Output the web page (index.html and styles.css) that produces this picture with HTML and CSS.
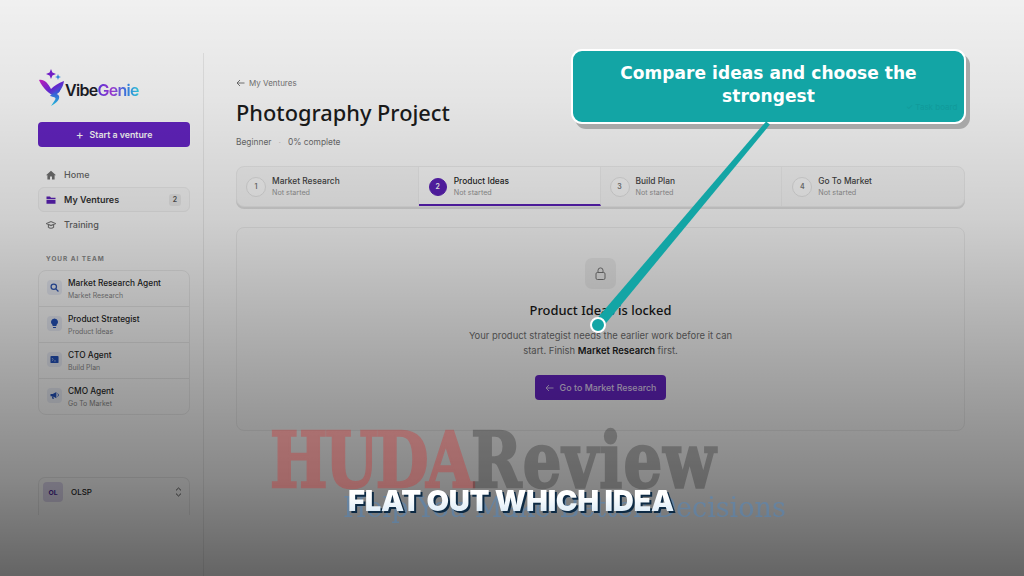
FILE: index.html
```html
<!DOCTYPE html>
<html lang="en">
<head>
<meta charset="utf-8">
<title>Photography Project</title>
<link rel="stylesheet" href="styles.css">
</head>
<body>
<div class="app">
  <aside class="sidebar">
    <div class="logo">
      <svg class="logo-mark" width="28" height="38" viewBox="0 0 28 38">
        <defs>
          <linearGradient id="lg1" x1="0" y1="0" x2="1" y2="1"><stop offset="0" stop-color="#d21fc8"/><stop offset=".55" stop-color="#6a2be0"/><stop offset="1" stop-color="#2c9ff0"/></linearGradient>
          <linearGradient id="lg2" x1="0" y1="0" x2="0" y2="1"><stop offset="0" stop-color="#4a3be8"/><stop offset="1" stop-color="#25d0f0"/></linearGradient>
        </defs>
        <path d="M1 11 C6 10 10 14 13 20 C16 17 20 14 26 12 C25 19 21 24 16 27 C12 25 5 20 1 11Z" fill="url(#lg1)"/>
        <path d="M22 19 C18 24 13 25 12 27 C15 28 19 28 17 31 L13 37 C19 34 22 30 21 27 C20 25 18 25 18 25 C21 24 23 22 22 19Z" fill="url(#lg2)"/>
        <path d="M13 0 L14.4 3.6 L18 5 L14.4 6.4 L13 10 L11.6 6.4 L8 5 L11.6 3.6Z" fill="#7a1fd6"/>
        <path d="M20 5 L20.8 7.2 L23 8 L20.8 8.8 L20 11 L19.2 8.8 L17 8 L19.2 7.2Z" fill="#2f8fe8"/>
      </svg>
      <span class="logo-text"><span class="logo-dark">Vibe</span><span class="logo-grad">Genie</span></span>
    </div>
    <button class="start-btn"><span class="plus">+</span>Start a venture</button>
    <nav class="nav">
      <a class="nav-item">
        <svg class="nav-ic" width="10" height="10" viewBox="0 0 10 10"><path d="M5 .8 L10 5.2 H8.6 V9.4 H6 V6.4 H4 V9.4 H1.4 V5.2 H0Z" fill="#707070"/></svg>
        Home</a>
      <a class="nav-item nav-active">
        <svg class="nav-ic" width="10" height="10" viewBox="0 0 10 10"><path d="M.5 1.5 H4 L5 2.7 H9.5 V4 H.5Z M.5 4.8 H9.5 V8.8 H.5Z" fill="#5b21b6"/></svg>
        My Ventures<span class="count">2</span></a>
      <a class="nav-item">
        <svg class="nav-ic" width="10" height="10" viewBox="0 0 10 10" fill="none" stroke="#777" stroke-width="1.1"><path d="M.6 3.6 L5 1.6 L9.4 3.6 L5 5.6Z"/><path d="M2.4 5 V7.2 C3.6 8.6 6.4 8.6 7.6 7.2 V5"/></svg>
        Training</a>
    </nav>
    <div class="team-label">YOUR AI TEAM</div>
    <ul class="team">
      <li class="agent">
        <span class="agent-ic"><svg width="9" height="9" viewBox="0 0 10 10" fill="none" stroke="#2d55b5" stroke-width="1.4"><circle cx="4.2" cy="4.2" r="3"/><path d="M6.5 6.5 L9.4 9.4"/></svg></span>
        <span class="agent-txt"><b>Market Research Agent</b><small>Market Research</small></span>
      </li>
      <li class="agent">
        <span class="agent-ic"><svg width="9" height="11" viewBox="0 0 10 12"><path d="M5 .5 A4 4 0 0 1 7.2 7.8 V8.8 H2.8 V7.8 A4 4 0 0 1 5 .5Z M3.4 9.8 H6.6 V11 H3.4Z" fill="#2350b8"/></svg></span>
        <span class="agent-txt"><b>Product Strategist</b><small>Product Ideas</small></span>
      </li>
      <li class="agent">
        <span class="agent-ic"><svg width="9" height="9" viewBox="0 0 10 10"><rect x=".5" y="1" width="9" height="8" rx="1" fill="#2350b8"/><path d="M2.2 3.4 L3.6 5 L2.2 6.4 M4.6 6.6 H6.4" stroke="#cfd8ee" stroke-width=".8" fill="none"/></svg></span>
        <span class="agent-txt"><b>CTO Agent</b><small>Build Plan</small></span>
      </li>
      <li class="agent">
        <span class="agent-ic"><svg width="10" height="9" viewBox="0 0 11 10"><path d="M.5 3.4 H3 L7 1 V8 L3 5.8 H.5Z M2 6 H3.6 L4.2 9 H2.8Z" fill="#2350b8"/><path d="M8.4 2.8 C9.6 3.6 9.6 5.4 8.4 6.2" stroke="#2350b8" fill="none"/></svg></span>
        <span class="agent-txt"><b>CMO Agent</b><small>Go To Market</small></span>
      </li>
    </ul>
    <div class="workspace">
      <span class="ws-avatar">OL</span>
      <span class="ws-name">OLSP</span>
      <svg width="7" height="10" viewBox="0 0 7 10" fill="none" stroke="#444" stroke-width=".9"><path d="M1 3.4 L3.5 1 L6 3.4 M1 6.6 L3.5 9 L6 6.6"/></svg>
    </div>
  </aside>
  <main class="main">
    <div class="crumb"><svg width="9" height="8" viewBox="0 0 9 8" fill="none" stroke="#666" stroke-width=".9"><path d="M8.5 4 H1 M4 1 L1 4 L4 7"/></svg>My Ventures</div>
    <h1 class="title">Photography Project</h1>
    <div class="meta"><span>Beginner</span><i>·</i><span>0% complete</span></div>
    <div class="tabs">
      <div class="tab"><span class="num">1</span><span class="tab-txt"><b>Market Research</b><small>Not started</small></span></div>
      <div class="tab tab-active"><span class="num">2</span><span class="tab-txt"><b>Product Ideas</b><small>Not started</small></span></div>
      <div class="tab"><span class="num">3</span><span class="tab-txt"><b>Build Plan</b><small>Not started</small></span></div>
      <div class="tab"><span class="num">4</span><span class="tab-txt"><b>Go To Market</b><small>Not started</small></span></div>
    </div>
    <section class="locked">
      <span class="lock"><svg width="11" height="13" viewBox="0 0 11 13" fill="none" stroke="#777" stroke-width="1"><rect x="1" y="5.5" width="9" height="7" rx="1.4"/><path d="M3 5.5 V3.4 A2.5 2.5 0 0 1 8 3.4 V5.5"/></svg></span>
      <h2>Product Ideas is locked</h2>
      <p>Your product strategist needs the earlier work before it can start. Finish <b>Market Research</b> first.</p>
      <button class="go-btn"><svg width="9" height="8" viewBox="0 0 9 8" fill="none" stroke="#cdbcec" stroke-width="1"><path d="M8.5 4 H1 M4 1 L1 4 L4 7"/></svg>Go to Market Research</button>
    </section>
  </main>
</div>
<div class="shade"></div>
<div class="watermark">
  <div class="wm-main"><span class="wm-red">HUDA</span><span class="wm-dark">Review</span></div>
  <div class="wm-sub">Help You Make Better Decisions</div>
</div>
<div class="callout">Compare ideas and choose the strongest<span class="ghost">✓ Task board</span></div>
<svg class="connector" width="1024" height="576" viewBox="0 0 1024 576">
  <polygon points="769.9,124.6 766.1,121.4 594.2,321.8 601.8,328.2" fill="#13a5a5"/>
  <circle cx="598" cy="325" r="7" fill="#13a5a5" stroke="#fff" stroke-width="2"/>
</svg>
<div class="caption">FLAT OUT WHICH IDEA</div>
</body>
</html>
```
FILE: styles.css
```css
* { box-sizing: border-box; }
html, body { margin: 0; width: 1024px; height: 576px; overflow: hidden; background: #fbfbfb; font-family: Inter, "Liberation Sans", sans-serif; color: #222; }
.app { display: flex; height: 576px; padding-top: 53px; }
.sidebar { width: 204px; height: 523px; border-right: 1px solid #e8e8e8; padding: 15px 13px 0 38px; display: flex; flex-direction: column; }
.logo { display: flex; align-items: flex-end; height: 39px; }
.logo-mark { flex: none; margin-right: -1px; }
.logo-text { font-size: 16px; font-weight: 600; letter-spacing: -.7px; line-height: 20px; margin-bottom: 7px; }
.logo-dark { color: #1d1d28; }
.logo-grad { background: linear-gradient(90deg, #5b3be8, #a83be0 35%, #3a7ff0 70%, #35d8e8); -webkit-background-clip: text; background-clip: text; color: transparent; }
.start-btn { margin-top: 15px; height: 25px; width: 152px; flex: none; border: 0; border-radius: 4px; background: #6524c4; color: #fff; font: 600 8.8px Inter, sans-serif; display: flex; align-items: center; justify-content: center; box-shadow: 0 0 0 1px rgba(255,255,255,.5); }
.plus { font-size: 12px; font-weight: 400; margin-right: 6px; }
.nav { display: flex; flex-direction: column; margin-top: 15px; }
.nav-item { display: flex; align-items: center; height: 25px; padding: 0 8px 0 4px; font-size: 9px; font-weight: 500; color: #666; border: 1px solid transparent; border-radius: 6px; }
.nav-ic { margin: 0 8px 0 3px; flex: none; }
.nav-active { color: #333; font-weight: 600; background: #f7f7f7; border-color: #ececec; }
.count { margin-left: auto; width: 12px; height: 12px; border-radius: 3px; background: #e8e8e8; font-size: 7px; display: flex; align-items: center; justify-content: center; color: #555; }
.team-label { margin-top: 18px; padding-left: 8px; font-size: 6.4px; font-weight: 700; letter-spacing: 1px; color: #8a8a8a; line-height: 8px; }
.team { list-style: none; margin: 7px 0 0; padding: 0; border: 1px solid #ebebeb; border-radius: 8px; }
.agent { display: flex; align-items: center; height: 36px; padding: 0 8px; gap: 6px; border-bottom: 1px solid #e8e8e8; }
.agent:last-child { border-bottom: 0; height: 35px; }
.agent-ic { width: 15px; height: 15px; border-radius: 4px; background: #e8ebf4; display: flex; align-items: center; justify-content: center; flex: none; margin-top: -3px; }
.agent-txt { display: flex; flex-direction: column; gap: 3px; }
.agent-txt b { font-size: 8.3px; font-weight: 500; color: #1f1f1f; line-height: 10px; }
.agent-txt small { font-size: 6.9px; color: #888; line-height: 9px; }
.workspace { margin-top: 62px; height: 38px; border: 1px solid #e8e8e8; border-bottom: 0; border-radius: 7px 7px 0 0; padding: 4px 7px 0 4px; display: flex; align-items: flex-start; }
.ws-avatar { width: 20px; height: 20px; border-radius: 4px; background: #dcd6ec; color: #4b2a96; font-size: 6.8px; font-weight: 700; display: flex; align-items: center; justify-content: center; }
.ws-name { margin-left: 8px; font-size: 8px; font-weight: 500; color: #222; line-height: 20px; flex: 1; }
.workspace svg { margin-top: 5px; }
.main { flex: 1; padding: 24px 59px 0 32px; min-width: 0; }
.crumb { display: flex; align-items: center; gap: 4px; font-size: 8px; color: #777; line-height: 12px; }
.title { margin: 7px 0 0; font: 500 21.8px/34px "Noto Sans", sans-serif; color: #1c1c1c; }
.meta { display: flex; align-items: center; margin-top: 6px; font-size: 8.4px; color: #6f6f6f; line-height: 12px; }
.meta i { margin: 0 7px; color: #ccc; font-style: normal; }
.tabs { display: grid; grid-template-columns: repeat(4, 1fr); height: 41px; margin-top: 18px; border: 1px solid #ebebeb; border-radius: 8px; background: #f6f6f6; box-shadow: 0 2px 0 #dedede; }
.tab { display: flex; align-items: center; padding: 0 9px; gap: 6px; border-right: 1px solid #ededed; }
.tab:last-child { border-right: 0; padding-left: 10px; }
.tab-active { background: #fbfbfb; border-bottom: 2px solid #5b21b6; padding-top: 2px; }
.num { width: 20px; height: 20px; border: 1px solid #e2e2e2; border-radius: 50%; background: #fafafa; color: #777; display: flex; align-items: center; justify-content: center; font-size: 7px; font-weight: 600; flex: none; }
.tab-active .num { background: #5b21b6; border-color: #5b21b6; color: #fff; width: 18px; height: 18px; margin-left: 1px; margin-right: 1px; }
.tab-txt { display: flex; flex-direction: column; gap: 1px; margin-top: -1px; }
.tab-txt b { font-size: 8.4px; font-weight: 500; color: #444; line-height: 11px; }
.tab-active b { color: #1f1f1f; }
.tab-txt small { font-size: 7.2px; color: #999; line-height: 9px; }
.locked { margin-top: 20px; height: 204px; border: 1px solid #ececec; border-radius: 8px; background: #fafafa; display: flex; flex-direction: column; align-items: center; padding-top: 30px; }
.lock { width: 31px; height: 31px; border-radius: 7px; background: #ededed; display: flex; align-items: center; justify-content: center; flex: none; }
.locked h2 { margin: 11px 0 0; font: 500 12.9px/20px "Noto Sans", sans-serif; color: #181818; }
.locked p { margin: 8px 0 0; width: 280px; font-size: 9.45px; line-height: 15px; color: #6e6e6e; text-align: center; }
.locked p b { font-weight: 600; color: #1e1e1e; }
.go-btn { margin-top: 17px; height: 25px; width: 131px; flex: none; border: 0; border-radius: 4px; background: #6524c4; color: #e0d4f4; font: 500 8.9px Inter, sans-serif; display: flex; align-items: center; justify-content: center; gap: 6px; }
.watermark { position: absolute; left: 270px; top: 420px; width: 520px; font-family: "DejaVu Serif", serif; font-weight: 700; }
.wm-main { font-size: 77px; line-height: 80px; white-space: nowrap; width: max-content; transform: scaleX(.79); transform-origin: left top; -webkit-text-stroke: 2.5px currentColor; }
.wm-red { color: #dc1e1e; opacity: .3; letter-spacing: -3px; }
.wm-dark { color: #000; opacity: .24; letter-spacing: 1.5px; }
.wm-sub { position: absolute; left: 73px; top: 73px; font-size: 27px; line-height: 30px; color: #3c8cdc; opacity: .35; font-weight: 400; white-space: nowrap; }
.shade { position: absolute; inset: 0; pointer-events: none; background: linear-gradient(180deg, rgba(0,0,0,.045) 0%, rgba(0,0,0,.09) 17%, rgba(0,0,0,.175) 38%, rgba(0,0,0,.34) 64%, rgba(0,0,0,.46) 83%, rgba(0,0,0,.6) 100%); }
.connector { position: absolute; left: 0; top: 0; pointer-events: none; }
.callout { position: absolute; left: 571px; top: 49px; width: 395px; height: 75px; padding: 11px 40px 0; border: 2px solid #fff; border-radius: 11px; background: #13a5a5; box-shadow: 4px 5px 0 #a8a8a8; color: #fff; text-align: center; font: 700 17px/23px "DejaVu Sans", sans-serif; letter-spacing: .05px; }
.ghost { position: absolute; left: 333px; top: 50px; font: 400 8px/12px Inter, sans-serif; letter-spacing: 0; color: #119a9a; }
.caption { position: absolute; left: 348px; top: 484px; font: 900 29.2px/34px Inter, sans-serif; letter-spacing: -.3px; white-space: nowrap; background: linear-gradient(180deg, #fff 35%, #dcebf7 85%); -webkit-background-clip: text; background-clip: text; color: transparent; filter: drop-shadow(2px 2px 0 #0d2a44); }
```
